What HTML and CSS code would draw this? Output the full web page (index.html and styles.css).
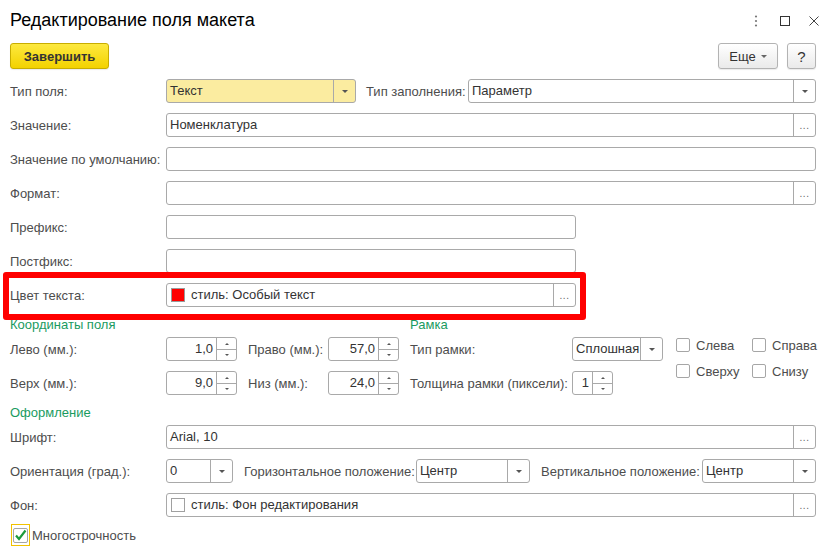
FILE: index.html
```html
<!DOCTYPE html>
<html lang="ru">
<head>
<meta charset="utf-8">
<title>Редактирование поля макета</title>
<link rel="stylesheet" href="styles.css">
</head>
<body>
<div class="window">
  <header class="titlebar">
    <h1 class="title">Редактирование поля макета</h1>
    <div class="win-controls">
      <svg class="wc" width="12" height="12" viewBox="0 0 12 12"><circle cx="6" cy="1.5" r="1.1" fill="#777"/><circle cx="6" cy="6" r="1.1" fill="#777"/><circle cx="6" cy="10.5" r="1.1" fill="#777"/></svg>
      <svg class="wc" width="12" height="12" viewBox="0 0 12 12"><rect x="1.5" y="1.5" width="9" height="9" fill="none" stroke="#333" stroke-width="1"/></svg>
      <svg class="wc" width="12" height="12" viewBox="0 0 12 12"><path d="M1.5 1.5 L10.5 10.5 M10.5 1.5 L1.5 10.5" stroke="#444" stroke-width="1" fill="none"/></svg>
    </div>
  </header>

  <div class="toolbar">
    <button class="btn btn-primary">Завершить</button>
    <div class="toolbar-right">
      <button class="btn btn-more">Еще <span class="caret"></span></button>
      <button class="btn btn-help">?</button>
    </div>
  </div>

  <div class="form">
    <div class="row">
      <span class="lbl">Тип поля:</span>
      <div class="field w190 yellow"><span class="val">Текст</span><span class="bp"><span class="tri"></span></span></div>
      <span class="lbl-inline l-fill">Тип заполнения:</span>
      <div class="field grow"><span class="val">Параметр</span><span class="bp"><span class="tri"></span></span></div>
    </div>
    <div class="row">
      <span class="lbl">Значение:</span>
      <div class="field grow"><span class="val">Номенклатура</span><span class="bp"><span class="dots">...</span></span></div>
    </div>
    <div class="row">
      <span class="lbl">Значение по умолчанию:</span>
      <div class="field grow"><span class="val"></span></div>
    </div>
    <div class="row">
      <span class="lbl">Формат:</span>
      <div class="field grow"><span class="val"></span><span class="bp"><span class="dots">...</span></span></div>
    </div>
    <div class="row">
      <span class="lbl">Префикс:</span>
      <div class="field w410"><span class="val"></span></div>
    </div>
    <div class="row">
      <span class="lbl">Постфикс:</span>
      <div class="field w410"><span class="val"></span></div>
    </div>
    <div class="row highlight">
      <span class="lbl">Цвет текста:</span>
      <div class="field w410"><span class="val"><span class="swatch red"></span>стиль: Особый текст</span><span class="bp"><span class="dots">...</span></span></div>
    </div>

    <div class="coords">
      <div class="col-a">
        <div class="heading">Координаты поля</div>
        <div class="row">
          <span class="lbl">Лево (мм.):</span>
          <div class="field spin w71"><span class="val num">1,0</span><span class="bp sp"><span class="up"></span><span class="mid"></span><span class="dn"></span></span></div>
          <span class="lbl-inline l-right">Право (мм.):</span>
          <div class="field spin w71"><span class="val num">57,0</span><span class="bp sp"><span class="up"></span><span class="mid"></span><span class="dn"></span></span></div>
        </div>
        <div class="row">
          <span class="lbl">Верх (мм.):</span>
          <div class="field spin w71"><span class="val num">9,0</span><span class="bp sp"><span class="up"></span><span class="mid"></span><span class="dn"></span></span></div>
          <span class="lbl-inline l-right">Низ (мм.):</span>
          <div class="field spin w71"><span class="val num">24,0</span><span class="bp sp"><span class="up"></span><span class="mid"></span><span class="dn"></span></span></div>
        </div>
      </div>
      <div class="col-b">
        <div class="heading">Рамка</div>
        <div class="frame">
          <div class="frame-fields">
            <div class="row">
              <span class="lbl lbl-frame">Тип рамки:</span>
              <div class="field w91"><span class="val">Сплошная</span><span class="bp"><span class="tri"></span></span></div>
            </div>
            <div class="row row-thick">
              <span class="lbl lbl-frame">Толщина рамки (пиксели):</span>
              <div class="field spin w41"><span class="val num">1</span><span class="bp sp"><span class="up"></span><span class="mid"></span><span class="dn"></span></span></div>
            </div>
          </div>
          <div class="checks">
            <label class="chk"><span class="box"></span>Слева</label>
            <label class="chk"><span class="box"></span>Справа</label>
            <label class="chk"><span class="box"></span>Сверху</label>
            <label class="chk"><span class="box"></span>Снизу</label>
          </div>
        </div>
      </div>
    </div>

    <div class="heading heading-design">Оформление</div>
    <div class="row">
      <span class="lbl">Шрифт:</span>
      <div class="field grow"><span class="val">Arial, 10</span><span class="bp"><span class="dots">...</span></span></div>
    </div>
    <div class="row">
      <span class="lbl">Ориентация (град.):</span>
      <div class="field w67"><span class="val">0</span><span class="bp"><span class="tri"></span></span></div>
      <span class="lbl-inline l-horiz">Горизонтальное положение:</span>
      <div class="field w114"><span class="val">Центр</span><span class="bp"><span class="tri"></span></span></div>
      <span class="lbl-inline l-vert">Вертикальное положение:</span>
      <div class="field grow"><span class="val">Центр</span><span class="bp"><span class="tri"></span></span></div>
    </div>
    <div class="row">
      <span class="lbl">Фон:</span>
      <div class="field grow"><span class="val"><span class="swatch white"></span>стиль: Фон редактирования</span><span class="bp"><span class="dots">...</span></span></div>
    </div>
    <div class="multi">
      <span class="focus"><span class="box checked"><svg width="13" height="13" viewBox="0 0 13 13"><path d="M2 6.5 L5 10 L11.5 1.5" fill="none" stroke="#1d9a3c" stroke-width="2.2"/></svg></span></span>
      <span class="multi-lbl">Многострочность</span>
    </div>
  </div>
</div>
</body>
</html>
```

FILE: styles.css
```css
html, body {
  margin: 0;
  padding: 0;
  background: #fff;
}
body {
  font-family: "Liberation Sans", Arial, sans-serif;
  font-size: 13px;
  color: #4d4d4d;
  width: 832px;
  height: 553px;
  overflow: hidden;
}
.window {
  padding: 0 16px 0 10px;
}
.titlebar {
  height: 43px;
  display: flex;
  align-items: center;
  justify-content: space-between;
  padding-bottom: 3px;
  box-sizing: border-box;
}
.title {
  margin: 0;
  font-size: 18px;
  font-weight: normal;
  color: #000;
  line-height: 22px;
}
.win-controls {
  display: flex;
  align-items: center;
  gap: 17px;
  margin-right: -4px;
  padding-top: 1px;
}
.wc { display: block; }

.toolbar {
  height: 26px;
  display: flex;
  justify-content: space-between;
  margin-bottom: 10px;
}
.toolbar-right {
  display: flex;
  gap: 9px;
}
.btn {
  font-family: "Liberation Sans", Arial, sans-serif;
  font-size: 13px;
  height: 26px;
  border: 1px solid #b3b3b3;
  border-radius: 3px;
  background: linear-gradient(#ffffff, #eaeaea);
  color: #333;
  padding: 0;
  box-shadow: 0 1px 1px rgba(0,0,0,0.08);
  cursor: default;
}
.btn-primary {
  width: 99px;
  font-weight: bold;
  background: linear-gradient(#fde93f, #f3d200);
  border-color: #c8ad00;
  color: #333;
}
.btn-more {
  width: 60px;
  display: flex;
  align-items: center;
  justify-content: center;
  gap: 5px;
}
.caret {
  width: 0;
  height: 0;
  border-left: 3px solid transparent;
  border-right: 3px solid transparent;
  border-top: 3px solid #666;
  margin-top: 1px;
}
.btn-help {
  width: 29px;
  font-size: 15px;
}

.form {
  display: flex;
  flex-direction: column;
}
.row {
  display: flex;
  align-items: center;
  height: 24px;
  margin-bottom: 10px;
}
.lbl {
  width: 156px;
  flex: none;
  white-space: nowrap;
}
.lbl-inline {
  flex: none;
  white-space: nowrap;
}
.l-fill { width: 102px; margin-left: 10px; }
.l-right { width: 80px; margin-left: 11px; }
.l-horiz { width: 172px; margin-left: 11px; }
.l-vert { width: 161px; margin-left: 11px; }

.field {
  display: flex;
  align-items: stretch;
  height: 24px;
  box-sizing: border-box;
  border: 1px solid #a9a9a9;
  border-radius: 3px;
  background: #fff;
  color: #333;
  flex: none;
}
.field.grow { flex: 1; }
.field.yellow { background: #fbeca0; }
.w190 { width: 190px; }
.w410 { width: 410px; }
.w71 { width: 71px; }
.w91 { width: 91px; }
.w41 { width: 41px; }
.w67 { width: 67px; }
.w114 { width: 114px; }

.val {
  flex: 1;
  padding: 0 3px;
  line-height: 22px;
  white-space: nowrap;
  overflow: hidden;
  display: flex;
  align-items: center;
}
.val.num {
  justify-content: flex-end;
  padding-right: 3px;
}
.bp {
  width: 21px;
  flex: none;
  border-left: 1px solid #a9a9a9;
  display: flex;
  align-items: center;
  justify-content: center;
}
.tri {
  width: 0;
  height: 0;
  border-left: 3px solid transparent;
  border-right: 3px solid transparent;
  border-top: 3px solid #555;
}
.dots {
  font-size: 10px;
  color: #666;
  line-height: 10px;
  letter-spacing: 0.5px;
  margin-top: 2px;
}
.bp.sp {
  width: 19px;
  flex-direction: column;
  justify-content: center;
  gap: 0;
  position: relative;
}
.sp .up, .sp .dn {
  width: 0;
  height: 0;
  border-left: 2px solid transparent;
  border-right: 2px solid transparent;
}
.sp .up { border-bottom: 2px solid #555; }
.sp .dn { border-top: 2px solid #555; }
.sp .mid {
  width: 100%;
  height: 1px;
  background: #a9a9a9;
  margin: 4px 0;
}

.swatch {
  width: 14px;
  height: 14px;
  box-sizing: border-box;
  border: 1px solid #a0a0a0;
  margin-right: 6px;
  margin-left: 1px;
  flex: none;
}
.swatch.red { background: #ff0000; border-color: #9a9a9a; }
.swatch.white { background: #fff; }

.highlight {
  position: relative;
  width: 566px;
}
.highlight::after {
  content: "";
  position: absolute;
  left: -7px;
  right: -10px;
  top: -11px;
  bottom: -13px;
  border: 6px solid #ff0000;
  border-radius: 3px;
  pointer-events: none;
}

.heading {
  color: #1a9b5f;
  height: 16px;
  line-height: 16px;
  margin-bottom: 4px;
  white-space: nowrap;
}
.coords {
  display: flex;
}
.col-a {
  width: 389px;
  flex: none;
}
.col-b {
  margin-left: 11px;
  flex: 1;
}
.frame {
  display: flex;
}
.frame-fields {
  flex: none;
}
.lbl-frame {
  width: 162px;
}
.row-thick {
  margin-top: 1px;
}
.checks {
  display: grid;
  grid-template-columns: 76px auto;
  row-gap: 12px;
  margin-left: 13px;
  padding-top: 1px;
  align-content: start;
}
.chk {
  display: flex;
  align-items: center;
  height: 14px;
  gap: 6px;
  white-space: nowrap;
}
.box {
  width: 14px;
  height: 14px;
  box-sizing: border-box;
  border: 1px solid #a6a6a6;
  border-radius: 2px;
  background: #fff;
  flex: none;
  display: flex;
  align-items: center;
  justify-content: center;
}
.heading-design {
  margin-top: 0;
}
.multi {
  display: flex;
  align-items: center;
  height: 22px;
  margin-top: -3px;
  margin-left: 1px;
}
.focus {
  width: 19px;
  height: 22px;
  box-sizing: border-box;
  border: 1px solid #f2c200;
  display: flex;
  align-items: center;
  justify-content: center;
}
.box.checked {
  width: 15px;
  height: 15px;
}
.multi-lbl {
  margin-left: 2px;
  color: #4d4d4d;
}
```
